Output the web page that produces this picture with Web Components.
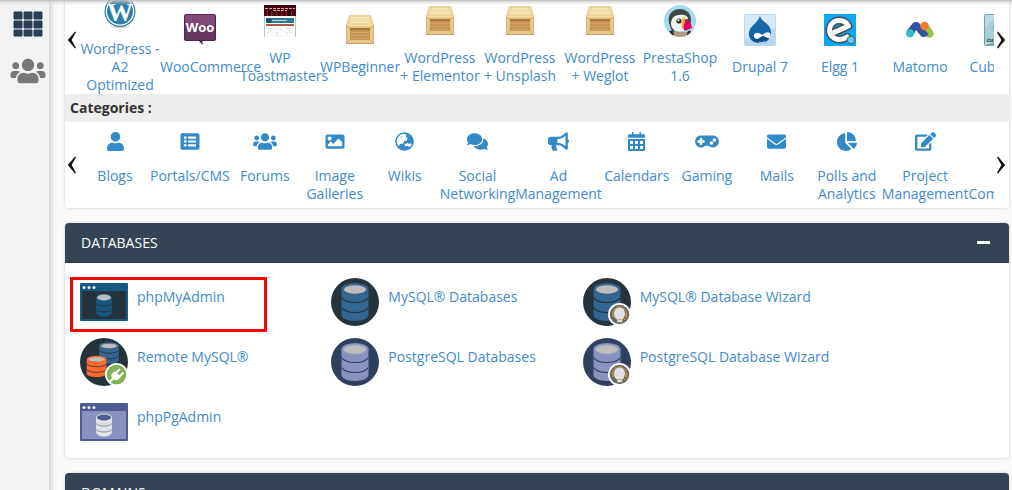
<!DOCTYPE html>
<html lang="en">
<head>
<meta charset="utf-8">
<title>cPanel - Tools</title>
<style>
  html, body { height: 100%; margin: 0; }
  body { overflow: hidden; font: 14px/18px "Open Sans", sans-serif; color: #333; background: #fafafa; }
</style>
</head>
<body>
<cp-app></cp-app>
<script>
const CRATE = `
  <path fill="#ecd39c" d="M3 1h22l3 10H0z"/><path fill="#f6e5b9" d="M5 3h18l2 6H3z"/>
  <path stroke="#ead3a0" stroke-width=".7" d="M4 5h20M3.500 7h21"/>
  <path fill="#dcb478" d="M0 11h28v19H0z"/><path fill="#e8c78c" d="M1 11.500h26v17.500H1z"/>
  <path fill="#c59353" d="M4 15h20v11H4z"/><path fill="#a5743a" d="M4 14h20v2H4z"/>
  <path stroke="#d9ab6a" stroke-width=".8" d="M5 18.500h18M5 21.500h18M5 24.500h18"/>
  <path stroke="#d0a365" stroke-width=".8" fill="none" d="M1 12l3 2.500M27 12l-3 2.500M1 29l3-3M27 29l-3-3"/>
  <path stroke="#f6dfae" fill="none" d="M1 11.500h26"/><path stroke="#c99d60" fill="none" d="M0 29.500h28"/>`;

/* A three-tier cylinder drawn in a 48px box. */
const cylinder = (body, line, lid, rim) => `
  <path fill="${body}" d="M10.500 11v26c0 3 5.500 6 13.500 6s13.500-3 13.500-6V11z"/>
  <ellipse cx="24" cy="11" rx="13.500" ry="6" fill="${body}"/>
  <ellipse cx="24" cy="11.500" rx="11.500" ry="4.700" fill="${lid}" stroke="${rim}" stroke-width=".8"/>
  <path fill="none" stroke="${line}" stroke-width="1.200" d="M10.500 19.500c2 3 7 5 13.500 5s11.500-2 13.500-5M10.500 29.500c2 3 7 5 13.500 5s11.500-2 13.500-5"/>`;
const MY = cylinder('#336791', '#222f38', '#bdbdbd', '#2c597d');
const PG = cylinder('#8892bf', '#2d3d58', '#bdbdbd', '#959dc4');
const WIZARD = `
  <circle cx="36.500" cy="36.500" r="11.500" fill="#fff"/><circle cx="36.500" cy="36.500" r="9.700" fill="#666"/>
  <path fill="none" stroke="#c48f3c" stroke-width="1" d="M29.500 36a7 7.500 0 0 1 14 0v3c0 2-2 3-5 3.200"/>
  <path fill="#e0e0e0" d="M36.500 29.500c3.800 0 5.600 2.700 5.400 6.500-.1 3-1.700 5-3 5.700l.6 2.600h-5.400l.4-2.600c-2.300-.8-3.500-3-3.500-5.900 0-3.600 2-6.300 5.500-6.300z"/>
  <path stroke="#e09a2b" stroke-width="1.200" d="M30 35v4M43 35v4M35.500 41.500h3"/>`;
const browserFrame = (frame, inner, body, line, lid) => `
  <rect width="48" height="38" rx="1" fill="${frame}"/><rect x="2" y="8" width="44" height="28" rx="1" fill="${inner}"/>
  <g fill="#eee"><circle cx="4" cy="4.500" r="1.500"/><circle cx="9" cy="4.500" r="1.500"/><circle cx="14" cy="4.500" r="1.500"/></g>
  <path fill="${body}" d="M16 15v14c0 2.500 3.500 4.500 8 4.500s8-2 8-4.500V15z"/><ellipse cx="24" cy="14.500" rx="8" ry="4" fill="${body}"/>
  <ellipse cx="24" cy="14.500" rx="7" ry="3" fill="${lid}"/>
  <path fill="none" stroke="${line}" d="M16 20.500c2 2 5 2.500 8 2.500s6-.5 8-2.500M16 26.500c2 2 5 2.500 8 2.500s6-.5 8-2.500"/>`;

/* name: [width, height, viewBox, markup] */
const ICONS = {
  users: [24, 19, '0 0 640 512', '<path d="M96 224c35.300 0 64-28.700 64-64s-28.700-64-64-64-64 28.700-64 64 28.700 64 64 64zm448 0c35.300 0 64-28.700 64-64s-28.700-64-64-64-64 28.700-64 64 28.700 64 64 64zm32 32h-64c-17.600 0-33.500 7.100-45.100 18.600 40.300 22.100 68.900 62 75.100 109.400h66c17.700 0 32-14.300 32-32v-32c0-35.300-28.700-64-64-64zm-256 0c61.900 0 112-50.100 112-112S381.900 32 320 32 208 82.100 208 144s50.100 112 112 112zm76.800 32h-8.300c-20.800 10-43.900 16-68.500 16s-47.600-6-68.500-16h-8.300C179.600 288 128 339.600 128 403.200V432c0 26.500 21.500 48 48 48h288c26.500 0 48-21.500 48-48v-28.800c0-63.600-51.600-115.200-115.200-115.200zm-223.700-13.400C161.500 263.100 145.600 256 128 256H64c-35.300 0-64 28.700-64 64v32c0 17.700 14.300 32 32 32h65.900c6.300-47.400 34.900-87.300 75.200-109.400z"/>'],
  user: [17, 19, '0 0 448 512', '<path d="M224 256c70.700 0 128-57.300 128-128S294.700 0 224 0 96 57.300 96 128s57.300 128 128 128zm89.600 32h-16.700c-22.200 10.200-46.900 16-72.900 16s-50.600-5.800-72.900-16h-16.700C60.200 288 0 348.200 0 422.400V464c0 26.500 21.500 48 48 48h352c26.500 0 48-21.500 48-48v-41.600c0-74.200-60.200-134.400-134.400-134.400z"/>'],
  list: [20, 19, '0 0 512 512', '<path d="M464 480H48c-26.500 0-48-21.500-48-48V80c0-26.500 21.500-48 48-48h416c26.500 0 48 21.500 48 48v352c0 26.500-21.500 48-48 48z"/><g fill="#fff"><circle cx="128" cy="152" r="38"/><circle cx="128" cy="256" r="38"/><circle cx="128" cy="360" r="38"/><path d="M204 122h212v58H204zM204 226h212v58H204zM204 330h212v58H204z"/></g>'],
  image: [20, 19, '0 0 512 512', '<path d="M464 448H48c-26.510 0-48-21.490-48-48V112c0-26.510 21.490-48 48-48h416c26.510 0 48 21.490 48 48v288c0 26.510-21.490 48-48 48zM112 120c-30.928 0-56 25.072-56 56s25.072 56 56 56 56-25.072 56-56-25.072-56-56-56zM64 384h384V272l-87.515-87.515c-4.686-4.686-12.284-4.686-16.971 0L208 320l-55.515-55.515c-4.686-4.686-12.284-4.686-16.971 0L64 336v48z"/>'],
  globe: [19, 19, '0 0 19 19', '<circle cx="9.500" cy="9.500" r="9.300"/><path fill="#fff" d="M1.800 10C1.600 6 4.500 2.300 8.500 1.800l3 .6L10.800 5l1.600.8-.3 2.700-3 .5-1 2.500-3 .5-1.300 2C2.600 13 2 11.500 1.800 10zM9.500 12.500l3-1.500 1.500 1 1.700-.7 1 1c-.4 1.200-1 2-1.800 2.700l-2.400-.9-2.500.2z"/><path d="M4.500 5l3.500-1-1.500 2.500zM10 6.500l1.500 1-2 .5z" opacity=".4"/>'],
  comments: [21, 19, '0 0 576 512', '<path d="M416 192c0-88.400-93.100-160-208-160S0 103.600 0 192c0 34.300 14.100 65.900 38 92-13.400 30.200-35.500 54.200-35.800 54.500-2.200 2.300-2.800 5.700-1.500 8.700S4.800 352 8 352c36.600 0 66.900-12.300 88.700-25 32.200 15.700 70.300 25 111.300 25 114.900 0 208-71.600 208-160zm122 220c23.900-26 38-57.700 38-92 0-66.900-53.500-124.200-129.300-148.100.9 6.600 1.300 13.300 1.300 20.100 0 105.900-107.700 192-240 192-10.800 0-21.300-.8-31.700-1.900C207.800 439.600 281.800 480 368 480c41 0 79.100-9.200 111.300-25 21.800 12.700 52.100 25 88.700 25 3.200 0 6.100-1.900 7.300-4.800 1.300-2.900.7-6.300-1.500-8.700-.3-.3-22.400-24.200-35.800-54.500z"/>'],
  bullhorn: [21, 19, '0 0 576 512', '<path d="M576 240c0-23.630-12.950-44.040-32-55.120V32.010C544 23.260 537.020 0 512 0c-7.120 0-14.190 2.380-19.980 7.020l-85.030 68.030C364.280 109.190 310.660 128 256 128H64c-35.350 0-64 28.650-64 64v96c0 35.350 28.650 64 64 64h33.700c-1.390 10.480-2.180 21.140-2.180 32 0 39.770 9.260 77.350 25.560 110.940 5.190 10.690 16.520 17.060 28.400 17.060h74.280c26.050 0 41.690-29.840 25.900-50.560-16.400-21.520-26.150-48.360-26.150-77.440 0-11.110 1.620-21.790 4.410-32H256c54.660 0 108.280 18.810 150.980 52.950l85.030 68.030a32.023 32.023 0 0 0 19.980 7.020c24.920 0 32-22.780 32-32V295.130C563.050 284.040 576 263.630 576 240zm-96 141.420l-33.050-26.440C392.950 311.780 325.120 288 256 288v-96c69.120 0 136.950-23.780 190.950-66.980L480 98.580v282.840z"/>'],
  calendar: [17, 19, '0 0 17 19', '<path d="M4 0h1.500v2.300h6V0H13v2.300h2.500A1.500 1.500 0 0 1 17 4v1.700H0V4a1.500 1.500 0 0 1 1.500-1.700H4zM0 7h17v10.500A1.500 1.500 0 0 1 15.500 19h-14A1.500 1.500 0 0 1 0 17.500z"/><path fill="#fff" d="M2 9h3v3H2zM7 9h3v3H7zM12 9h3v3h-3zM2 14h3v3H2zM7 14h3v3H7zM12 14h3v3h-3z"/>'],
  gamepad: [24, 19, '0 0 640 512', '<path d="M480 96H160C71.600 96 0 167.600 0 256s71.600 160 160 160c44.800 0 85.200-18.400 114.200-48h91.500c29 29.600 69.500 48 114.200 48 88.400 0 160-71.600 160-160S568.400 96 480 96zM256 276c0 6.600-5.400 12-12 12h-52v52c0 6.600-5.400 12-12 12h-40c-6.600 0-12-5.400-12-12v-52H76c-6.600 0-12-5.400-12-12v-40c0-6.600 5.400-12 12-12h52v-52c0-6.600 5.400-12 12-12h40c6.600 0 12 5.400 12 12v52h52c6.600 0 12 5.400 12 12v40zm184 68c-26.500 0-48-21.500-48-48s21.500-48 48-48 48 21.500 48 48-21.500 48-48 48zm80-80c-26.500 0-48-21.500-48-48s21.500-48 48-48 48 21.500 48 48-21.500 48-48 48z"/>'],
  envelope: [19, 19, '0 0 512 512', '<path d="M502.300 190.800c3.900-3.100 9.700-.2 9.700 4.700V400c0 26.500-21.500 48-48 48H48c-26.500 0-48-21.500-48-48V195.600c0-5 5.700-7.800 9.700-4.700 22.400 17.400 52.100 39.500 154.100 113.600 21.100 15.400 56.700 47.800 92.200 47.600 35.700.3 72-32.800 92.300-47.600 102-74.100 131.600-96.300 154-113.700zM256 320c23.200.4 56.600-29.200 73.400-41.400 132.700-96.300 142.800-104.700 173.400-128.700 5.800-4.500 9.200-11.500 9.200-18.900v-19c0-26.500-21.500-48-48-48H48c-26.500 0-48 21.500-48 48v19c0 7.400 3.400 14.300 9.200 18.900 30.600 23.900 40.700 32.400 173.400 128.700 16.800 12.200 50.200 41.800 73.400 41.400z"/>'],
  pie: [20, 19, '0 0 544 512', '<path d="M527.790 288H290.500l158.030 158.030c6.040 6.040 15.980 6.530 22.190.68 38.700-36.460 65.320-85.610 73.130-140.860 1.340-9.460-6.510-17.850-16.060-17.850zm-15.830-64.800C503.720 103.740 408.260 8.280 288.800.04 279.680-.59 272 7.100 272 16.240V240h223.770c9.140 0 16.820-7.680 16.190-16.800zM224 288V50.710c0-9.550-8.390-17.400-17.840-16.060C86.990 51.490-4.100 155.600.14 280.370 4.500 408.510 114.830 513.590 243.030 511.980c50.400-.63 96.970-16.870 135.260-44.030 7.900-5.600 8.420-17.230 1.570-24.080L224 288z"/>'],
  edit: [21, 19, '0 0 576 512', '<path d="M402.600 83.200l90.200 90.200c3.800 3.800 3.800 10 0 13.800L274.400 405.600l-92.800 10.300c-12.400 1.400-22.900-9.100-21.500-21.500l10.300-92.800L388.800 83.200c3.800-3.800 10-3.800 13.800 0zm162-22.900l-48.800-48.800c-15.200-15.200-39.900-15.200-55.200 0l-35.400 35.400c-3.800 3.800-3.800 10 0 13.800l90.200 90.200c3.800 3.800 10 3.800 13.800 0l35.400-35.400c15.200-15.300 15.200-40 0-55.200zM384 346.200V448H64V128h229.800c3.200 0 6.200-1.300 8.500-3.500l40-40c7.600-7.600 2.200-20.500-8.500-20.500H48C21.500 64 0 85.500 0 112v352c0 26.500 21.500 48 48 48h352c26.500 0 48-21.500 48-48V306.200c0-10.700-12.900-16-20.500-8.500l-40 40c-2.200 2.300-3.500 5.300-3.500 8.500z"/>'],
  cart: [21, 19, '0 0 21 19', '<path d="M0 1h4l.5 2H20l-2 8H6.500l.4 2H17v2H5.300L2.800 3H0z"/><circle cx="7" cy="17" r="1.800"/><circle cx="16" cy="17" r="1.800"/>'],
  team: [36, 28, '0 0 640 512', null],
  apps: [30, 26, '0 0 30 26', '<path d="M1 1h8v7H1zM11 1h8v7h-8zM21 1h8v7h-8zM1 10h8v7H1zM11 10h8v7h-8zM21 10h8v7h-8zM1 19h8v6H1zM11 19h8v6h-8zM21 19h8v6h-8z" stroke="currentColor" stroke-linejoin="round"/>'],
  prev: [11, 18, '0 0 11 18', '<path d="M8 .5L.8 9 8 17.500l1-.8L4.600 9 9 1.300z"/>'],
  next: [11, 18, '0 0 11 18', '<path d="M2 .5L9.200 9 2 17.500l-1-.8L5.400 9 1 1.300z"/>'],
  minus: [13, 3, '0 0 13 3', '<rect width="13" height="3" rx=".5"/>'],

  wordpress: [32, 32, '0 0 32 32', '<ellipse cx="16" cy="31" rx="10" ry="1" fill="#ddd"/><circle cx="16" cy="15.500" r="15.500" fill="#2f7ea6"/><circle cx="16" cy="15.500" r="14.300" fill="#fff"/><circle cx="16" cy="15.500" r="13" fill="#2f7fa8"/><text x="16" y="25" text-anchor="middle" font-family="Liberation Serif, serif" font-weight="700" font-size="26" fill="#fff">W</text>'],
  woo: [32, 32, '0 0 32 32', '<path fill="#4f274a" d="M2 0h28a2 2 0 0 1 2 2v23a2 2 0 0 1-2 2H18.500v4L15 27H2a2 2 0 0 1-2-2V2a2 2 0 0 1 2-2z"/><path fill="#83487b" d="M2 1h28l1 1v11H1V2z"/><path fill="#68355f" d="M1 11h30v13l-1 2H2l-1-2z"/><text x="16" y="18" text-anchor="middle" font-family="Open Sans, sans-serif" font-weight="700" font-size="13" fill="#fff">Woo</text>'],
  toast: [32, 32, '0 0 32 32', '<path fill="#a6cbd8" d="M0 0h32v32H0z"/><path fill="#f8fafc" d="M1 11h30v21H1z"/><path fill="#46060f" d="M0 0h32v11H0z"/><path stroke="#a10d22" d="M3.500 5v6M7.500 6v5M12.500 5v6M17.500 6v5M22.500 5v6M27.500 6v5"/><path stroke="#120206" stroke-width="2" d="M5 6v4M15 6v5M25 5v6"/><path stroke="#d9a5aa" stroke-dasharray="3 1" d="M1 3.500h30M9 5.500h14"/><path fill="#2f7895" d="M2 13h28v5H2z"/><path fill="#bcd7e1" d="M8 15h15v1H8z"/><circle cx="5" cy="15.500" r="2.500" fill="#1e4b63"/><path fill="#b5544e" d="M2 19h28v2H2z"/><path stroke="#dde2ea" stroke-dasharray="2 1" d="M3 23.500h9M13 24.500h6M22 23.500h7M3 27.500h3M12 27.500h2M22 27.500h6M12 30.500h3"/>'],
  crate: [28, 32, '0 0 28 32', CRATE],
  presta: [32, 32, '0 0 32 32', '<clipPath id="c"><circle cx="16" cy="16" r="16"/></clipPath><g clip-path="url(#c)"><path fill="#a4dbe8" d="M0 0h32v32H0z"/><path fill="#43484b" d="M5 18C3 9 9 4 16 4c7 0 11 5 11 11l-1 9-18 3z"/><path fill="#f4f4f4" d="M7 19c0-5 3-9 8-9 4-1 8 0 9 3l-3 13H11c-2-2-4-4-4-7z"/><circle cx="15" cy="16" r="2.600" fill="#333"/><circle cx="14.500" cy="15.300" r="1" fill="#fff"/><circle cx="22.500" cy="15.500" r="1.500" fill="#333"/><path fill="#f6a724" d="M18.500 12l2.500 1v9l-3 2c-1-4 1-8 .5-12z"/><path fill="#df0067" d="M22 15c3 1 6 4 6 8-3 0-7 4-8 2-1-3 0-7 2-10z"/><path fill="#b29a80" d="M8 27h16v5H8z"/><path fill="#2d3438" d="M5 26c3-1 5 0 5 4l-2 1zM27 26c-3-1-4 0-4 4l2 1z"/></g>'],
  drupal: [32, 32, '0 0 32 32', '<rect width="32" height="32" rx="2" fill="#b9d7ed"/><path fill="#d6e9f6" d="M1 1h30v13L1 26z"/><path fill="#1667a8" d="M16 2c1 4 4 5 7 8 4 3 5 9 3 13-2 5-7 7-11 6C8 29 4 24 5 18c1-6 8-8 11-16z"/><path fill="#0b528b" d="M26 16c2 8-4 12-9 12-6 1-10-3-11-7 5 4 14 4 20-5z"/><path fill="#fff" d="M10 21c1-3 5-3 8 0 2-2 6-4 8-2 1 3 1 5-1 5-3 0-4-2-6-2s-4 3-6 3-4-2-3-4z"/><path fill="none" stroke="#fff" stroke-width=".8" d="M15 28c2 1 4 1 6-1"/>'],
  elgg: [32, 32, '0 0 32 32', '<path fill="#09a9fa" d="M0 0h32v32H0z"/><g fill="none" stroke-linejoin="round" stroke-linecap="round"><path stroke="#494b4d" stroke-width="8" d="M10 18.500L24.500 12C21 4.500 9 4.500 6 13 3 23 14 29 23 23"/><path stroke="#fff" stroke-width="5" d="M10 18.500L24.500 12C21 4.500 9 4.500 6 13 3 23 14 29 23 23"/></g><circle cx="27" cy="26" r="3.800" fill="#65c8ef" stroke="#45616f"/>'],
  matomo: [32, 32, '0 0 32 32', '<path fill="#fdfdfc" d="M0 0h32v32H0z"/><path fill="#97c73d" d="M19 14l5-4 5 7.500a4 4 0 1 1-7 4z"/><path fill="#3450a3" d="M2.500 17L9 9c1.500-1.500 5-1.500 6.500.5l2 2.500 7 8c-1.500 3.500-6 4-8 1.500L12 16l-2 4z"/><circle cx="6" cy="19.200" r="4" fill="#33bdc5"/><circle cx="20.500" cy="12" r="4.200" fill="#f47c2f"/>'],
  cube: [32, 32, '0 0 32 32', '<rect width="32" height="32" rx="2" fill="#6fa4b0"/><path fill="#bddce2" d="M1 1h30v22L1 31z"/><path fill="#a3ccd4" d="M1 14L14 1h17v22L1 29z"/><path fill="none" stroke="#23849b" stroke-width="3" d="M17 8c-8 0-8 12 0 12"/><text x="16" y="28" text-anchor="middle" font-family="Open Sans, sans-serif" font-weight="700" font-size="6" fill="#333">cubecart</text>'],

  mysql: [48, 48, '0 0 48 48', '<circle cx="24" cy="24" r="24" fill="#25333d"/>' + MY],
  pgsql: [48, 48, '0 0 48 48', '<circle cx="24" cy="24" r="24" fill="#30405f"/>' + PG],
  mysqlWizard: [48, 48, '0 0 48 48', '<circle cx="24" cy="24" r="24" fill="#25333d"/>' + MY + WIZARD],
  pgsqlWizard: [48, 48, '0 0 48 48', '<circle cx="24" cy="24" r="24" fill="#30405f"/>' + PG + WIZARD],
  remote: [48, 48, '0 0 48 48', `<circle cx="24" cy="24" r="24" fill="#25333d"/>
    <g transform="translate(11.500 1.500) scale(.73 .56)">${MY}</g>
    <g transform="translate(-1 15) scale(.73 .56)">${cylinder('#fd6a2c', '#25333d', '#bdbdbd', '#e25c24')}</g>
    <circle cx="36.500" cy="36.500" r="11.500" fill="#fff"/><circle cx="36.500" cy="36.500" r="9.800" fill="#7fb356"/>
    <path fill="#fff" d="M35 33l6 6-2 2c-2 1.500-4 1.500-5.500.5L30 45l-1.500-1.500 3.500-3.500c-1-1.500-1-3.500.5-5z"/><path stroke="#fff" stroke-width="2" d="M36 35l4-4M39.500 38.500l4-4"/>`],
  phpMyAdmin: [48, 38, '0 0 48 38', browserFrame('#155a80', '#25333d', '#155a80', '#25333d', '#bdbdbd')],
  phpPgAdmin: [48, 38, '0 0 48 38', browserFrame('#4f5b93', '#8892bf', '#e2e2e2', '#8892bf', '#4f5b93')]
};
ICONS.team[3] = ICONS.users[3];

const define = (name, html) => customElements.define(name, class extends HTMLElement {
  constructor() {
    super();
    const t = document.createElement('template');
    t.innerHTML = typeof html === 'function' ? html(this) : html;
    this.attachShadow({ mode: 'open' }).append(t.content.cloneNode(true));
  }
});

define('cp-icon', el => {
  const [w, h, box, art] = ICONS[el.getAttribute('name')];
  return `<style>:host{display:block;flex:none} svg{display:block}</style>
    <svg width="${w}" height="${h}" viewBox="${box}" fill="currentColor" aria-hidden="true">${art}</svg>`;
});

define('cp-sidebar', `
<style>
  :host { display: block; flex: none; width: 49px; background: #f2f2f2; box-shadow: 0 0 8px rgba(0,0,0,.3); }
  nav { display: flex; flex-direction: column; align-items: center; gap: 20px; padding: 11px 0 0 6px; }
  a { color: #293f54; }
  a + a { color: #777; }
</style>
<nav>
  <a href="#tools" aria-label="Tools"><cp-icon name="apps"></cp-icon></a>
  <a href="#users" aria-label="User Manager"><cp-icon name="team"></cp-icon></a>
</nav>`);

define('cp-carousel', `
<style>
  :host { display: flex; align-items: stretch; }
  .list { flex: 1; min-width: 0; overflow: hidden; display: flex; align-items: center; padding-top: 10px; }
  :host([top]) .list { align-items: flex-start; padding-bottom: 5px; }
  button { flex: none; width: 15px; padding: 0; border: 0; background: none; color: #111; display: flex; align-items: center; justify-content: center; }
</style>
<button type="button" aria-label="Previous"><cp-icon name="prev"></cp-icon></button>
<div class="list"><slot></slot></div>
<button type="button" aria-label="Next"><cp-icon name="next"></cp-icon></button>`);

define('cp-app-link', el => `
<style>
  :host { display: block; flex: none; width: 80px; }
  a { display: flex; flex-direction: column; gap: 12px; color: #428bca; text-decoration: none; text-align: center; }
  cp-icon { align-self: center; }
</style>
<a href="#app"><cp-icon name="${el.getAttribute('icon')}"></cp-icon><span><slot></slot></span></a>`);

define('cp-category', el => `
<style>
  :host { display: block; flex: none; width: min-content; min-width: 70px; }
  a { display: flex; flex-direction: column; gap: 16px; color: #428bca; text-decoration: none; text-align: center; }
  cp-icon { align-self: center; color: #328ac8; }
  :host([single]) { white-space: nowrap; }
</style>
<a href="#category"><cp-icon name="${el.getAttribute('icon')}"></cp-icon><span><slot></slot></span></a>`);

define('cp-panel', el => `
<style>
  :host { display: block; background: #fff; border-radius: 4px; box-shadow: 0 0 3px rgba(0,0,0,.2); }
  header { box-sizing: border-box; height: 40px; display: flex; align-items: center; justify-content: space-between; padding: 0 19px 0 16px; background: #344454; border-bottom: 1px solid #273646; border-radius: 4px 4px 0 0; color: #fff; }
  h2 { margin: 0; font-size: 14px; font-weight: 400; }
  button { padding: 8px 0; border: 0; background: none; color: inherit; }
  .grid { display: grid; grid-template-columns: repeat(3, 11fr) 7fr; row-gap: 12px; padding: 15px 15px 12px; }
  .grid ::slotted(:nth-child(3n+1)) { grid-column: 1; }
</style>
<header><h2>${el.getAttribute('heading')}</h2><button type="button" aria-label="Collapse"><cp-icon name="minus"></cp-icon></button></header>
<div class="grid"><slot></slot></div>`);

define('cp-tool', el => `
<style>
  :host { display: block; position: relative; min-width: 0; }
  a { display: flex; gap: 9px; color: #428bca; text-decoration: none; white-space: nowrap; }
  .icon { height: 48px; display: flex; align-items: center; }
  .label { padding-top: 10px; }
  :host([marked])::after { content: ""; position: absolute; left: -10px; top: -1px; width: 197px; height: 55px; box-sizing: border-box; border: 3px solid #f00; border-radius: 1px; }
</style>
<a href="#tool"><span class="icon"><cp-icon name="${el.getAttribute('icon')}"></cp-icon></span><span class="label"><slot></slot></span></a>`);

define('cp-app', `
<style>
  :host { display: flex; min-height: 100vh; position: relative; }
  :host::before { content: ""; position: absolute; z-index: 1; inset: 0 0 auto; height: 5px; background: linear-gradient(#bdbdbd, rgba(200,200,200,.5) 40%, rgba(255,255,255,0)); }
  main { flex: 1; min-width: 0; display: flex; flex-direction: column; gap: 15px; padding: 0 3px 0 16px; }
  .apps { margin-top: -14px; background: #fff; border-radius: 4px; box-shadow: 0 0 3px rgba(0,0,0,.2); }
  h3 { margin: 0; padding: 5px; font-size: 14px; font-weight: 700; background: #ededed; }
</style>
<cp-sidebar></cp-sidebar>
<main>
  <section class="apps">
    <cp-carousel>
      <cp-app-link icon="wordpress">WordPress - A2 Optimized</cp-app-link>
      <cp-app-link icon="woo">WooCommerce</cp-app-link>
      <cp-app-link icon="toast">WP Toastmasters</cp-app-link>
      <cp-app-link icon="crate">WPBeginner</cp-app-link>
      <cp-app-link icon="crate">WordPress + Elementor</cp-app-link>
      <cp-app-link icon="crate">WordPress + Unsplash</cp-app-link>
      <cp-app-link icon="crate">WordPress + Weglot</cp-app-link>
      <cp-app-link icon="presta">PrestaShop 1.6</cp-app-link>
      <cp-app-link icon="drupal">Drupal 7</cp-app-link>
      <cp-app-link icon="elgg">Elgg 1</cp-app-link>
      <cp-app-link icon="matomo">Matomo</cp-app-link>
      <cp-app-link icon="cube">CubeCart</cp-app-link>
    </cp-carousel>
    <h3>Categories :</h3>
    <cp-carousel top>
      <cp-category icon="user">Blogs</cp-category>
      <cp-category icon="list" single>Portals/CMS</cp-category>
      <cp-category icon="users">Forums</cp-category>
      <cp-category icon="image">Image Galleries</cp-category>
      <cp-category icon="globe">Wikis</cp-category>
      <cp-category icon="comments">Social Networking</cp-category>
      <cp-category icon="bullhorn">Ad Management</cp-category>
      <cp-category icon="calendar">Calendars</cp-category>
      <cp-category icon="gamepad">Gaming</cp-category>
      <cp-category icon="envelope">Mails</cp-category>
      <cp-category icon="pie">Polls and Analytics</cp-category>
      <cp-category icon="edit">Project Management</cp-category>
      <cp-category icon="cart">E-Commerce</cp-category>
    </cp-carousel>
  </section>
  <cp-panel heading="DATABASES">
    <cp-tool icon="phpMyAdmin" marked>phpMyAdmin</cp-tool>
    <cp-tool icon="mysql">MySQL® Databases</cp-tool>
    <cp-tool icon="mysqlWizard">MySQL® Database Wizard</cp-tool>
    <cp-tool icon="remote">Remote MySQL®</cp-tool>
    <cp-tool icon="pgsql">PostgreSQL Databases</cp-tool>
    <cp-tool icon="pgsqlWizard">PostgreSQL Database Wizard</cp-tool>
    <cp-tool icon="phpPgAdmin">phpPgAdmin</cp-tool>
  </cp-panel>
  <cp-panel heading="DOMAINS"></cp-panel>
</main>`);
</script>
</body>
</html>
